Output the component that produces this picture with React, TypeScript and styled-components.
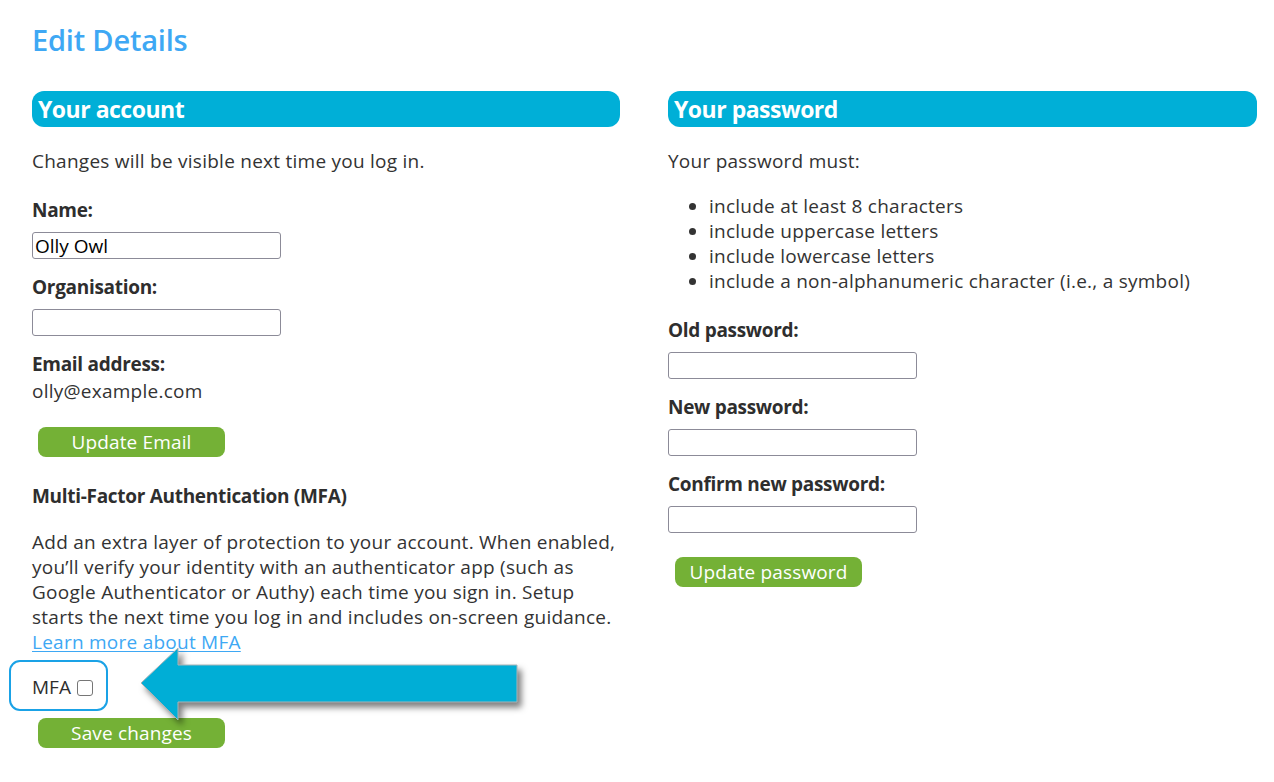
import React from "react";
import styled, { createGlobalStyle } from "styled-components";

const Global = createGlobalStyle`
  html, body { margin: 0; padding: 0; background: #ffffff; }
  body { font-family: "Open Sans", "Noto Sans", Arial, sans-serif; color: #333333; }
  * { box-sizing: border-box; }
`;

const Page = styled.main`
  padding: 23px 17px 0 32px;
  width: 1274px;
  min-height: 782px;
`;

const Title = styled.h1`
  margin: 0 0 34px;
  font-size: 29px;
  line-height: 34px;
  font-weight: 600;
  color: #3ea8f4;
  letter-spacing: -0.2px;
`;

const Columns = styled.div`
  display: grid;
  grid-template-columns: 588px 589px;
  column-gap: 48px;
  align-items: start;
`;

const Column = styled.section`
  display: flex;
  flex-direction: column;
  align-items: flex-start;
`;

const Bar = styled.h2`
  align-self: stretch;
  margin: 0 0 22px;
  height: 36px;
  padding: 0 6px;
  border-radius: 12px;
  background: #00afd7;
  color: #ffffff;
  font-size: 23px;
  font-weight: 700;
  line-height: 36px;
  letter-spacing: -0.5px;
`;

const Text = styled.p<{ $mb?: number }>`
  margin: 0 0 ${(p) => p.$mb ?? 0}px;
  font-size: 19px;
  line-height: 25px;
  letter-spacing: 0.25px;
  color: #333333;
`;

const Label = styled.label<{ $mb?: number }>`
  display: block;
  margin: 0 0 ${(p) => p.$mb ?? 9}px;
  font-size: 19px;
  line-height: 25px;
  font-weight: 700;
  color: #2e2e2e;
  letter-spacing: -0.3px;
`;

const SubHeading = styled.h3`
  margin: 27px 0 21px;
  font-size: 19px;
  line-height: 25px;
  font-weight: 700;
  color: #2e2e2e;
  letter-spacing: -0.3px;
`;

const Field = styled.input`
  display: block;
  width: 249px;
  height: 27px;
  margin: 0 0 16px;
  padding: 0 2px;
  border: 1px solid #8c8b98;
  border-radius: 3px;
  font-family: "Open Sans", "Noto Sans", Arial, sans-serif;
  font-size: 19px;
  color: #000000;
  background: #ffffff;
  outline: none;
`;

const Value = styled.div`
  margin: 2px 0 23px;
  font-size: 19px;
  line-height: 25px;
  letter-spacing: 0.25px;
  color: #333333;
`;

const GreenButton = styled.button<{ $mt?: number; $ml?: number }>`
  margin: ${(p) => p.$mt ?? 0}px 0 0 ${(p) => p.$ml ?? 6}px;
  width: 187px;
  height: 30px;
  padding: 0;
  border: none;
  border-radius: 8px;
  background: #74b136;
  color: #ffffff;
  font-family: "Open Sans", "Noto Sans", Arial, sans-serif;
  font-size: 19px;
  line-height: 30px;
  letter-spacing: 0.15px;
  cursor: pointer;
`;

const Link = styled.a`
  color: #3ea8f4;
  text-decoration: underline;
  text-underline-offset: 2px;
`;

const Bullets = styled.ul`
  margin: 20px 0 24px;
  padding: 0 0 0 41px;
  font-size: 19px;
  line-height: 25px;
  letter-spacing: 0.25px;
  color: #333333;
`;

const MfaRow = styled.div`
  position: relative;
  display: flex;
  align-items: center;
  gap: 6px;
  margin: 20px 0 18px;
  height: 25px;
  font-size: 19px;
  line-height: 25px;
  color: #2e2e2e;
`;

const Check = styled.input`
  appearance: none;
  margin: 0;
  width: 16px;
  height: 16px;
  border: 1px solid #767676;
  border-radius: 3px;
  background: #ffffff;
`;

const Highlight = styled.span`
  position: absolute;
  left: -23px;
  top: -15px;
  width: 99px;
  height: 51px;
  border: 2px solid #1aa2e6;
  border-radius: 11px;
  pointer-events: none;
`;

const Arrow = styled.svg`
  position: absolute;
  left: 105px;
  top: -32px;
  width: 390px;
  height: 90px;
  overflow: visible;
  filter: drop-shadow(4px 5px 3px rgba(0, 0, 0, 0.5));
  pointer-events: none;
  z-index: 2;
`;

export default function App() {
  return (
    <>
      <Global />
      <Page>
        <Title>Edit Details</Title>
        <Columns>
          <Column>
            <Bar>Your account</Bar>
            <Text $mb={24}>Changes will be visible next time you log in.</Text>
            <Label>Name:</Label>
            <Field defaultValue="Olly Owl" />
            <Label>Organisation:</Label>
            <Field defaultValue="" />
            <Label $mb={0}>Email address:</Label>
            <Value>olly@example.com</Value>
            <GreenButton>Update Email</GreenButton>
            <SubHeading>Multi-Factor Authentication (MFA)</SubHeading>
            <Text>
              Add an extra layer of protection to your account. When enabled,
              you’ll verify your identity with an authenticator app (such as
              Google Authenticator or Authy) each time you sign in. Setup
              starts the next time you log in and includes on-screen guidance.
              <br />
              <Link href="#">Learn more about MFA</Link>
            </Text>
            <MfaRow>
              <span>MFA</span>
              <Check type="checkbox" />
              <Highlight />
              <Arrow viewBox="0 0 390 90">
                <path
                  d="M4 40 L41 5 L41 22 L380 22 L380 59 L41 59 L41 77 Z"
                  fill="#00aed6"
                  stroke="#a8b4b8"
                  strokeWidth="1"
                />
              </Arrow>
            </MfaRow>
            <GreenButton>Save changes</GreenButton>
          </Column>
          <Column>
            <Bar>Your password</Bar>
            <Text>Your password must:</Text>
            <Bullets>
              <li>include at least 8 characters</li>
              <li>include uppercase letters</li>
              <li>include lowercase letters</li>
              <li>include a non-alphanumeric character (i.e., a symbol)</li>
            </Bullets>
            <Label>Old password:</Label>
            <Field type="password" />
            <Label>New password:</Label>
            <Field type="password" />
            <Label>Confirm new password:</Label>
            <Field type="password" />
            <GreenButton $mt={8} $ml={7}>
              Update password
            </GreenButton>
          </Column>
        </Columns>
      </Page>
    </>
  );
}
